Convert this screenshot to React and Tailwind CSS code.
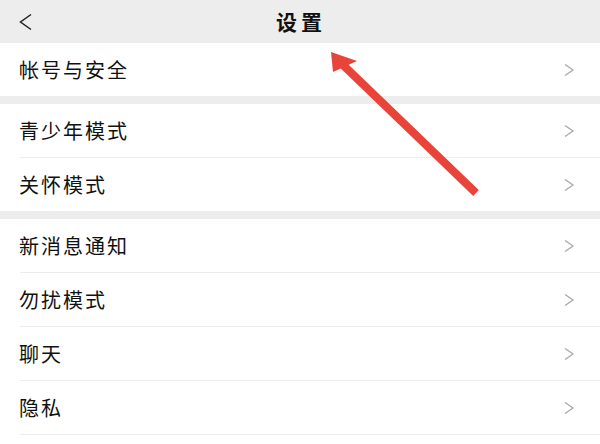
import React from "react";

const font = { fontFamily: '"Noto Sans CJK SC", "Noto Sans", sans-serif' };

function Chevron() {
  return (
    <svg width="12" height="14" viewBox="0 0 12 14" className="mr-[25px]">
      <path d="M2 1.5 L10 7 L2 12.5" fill="none" stroke="#a8a8a8" strokeWidth="1.3" />
    </svg>
  );
}

function Row({ label, divider }) {
  return (
    <div className="flex flex-col bg-white">
      <div className="flex h-[53px] items-center justify-between">
        <span className="pl-[19px] text-[20px] tracking-[2px] text-[#111]">{label}</span>
        <Chevron />
      </div>
      {divider && <div className="ml-[20px] h-px bg-[#ececec]" />}
    </div>
  );
}

export default function App() {
  return (
    <div className="relative h-[444px] w-[600px] overflow-hidden bg-white" style={font}>
      <div className="flex h-[43px] items-center bg-[#ededed]">
        <div className="flex w-[60px] pl-[18px]">
          <svg width="16" height="18" viewBox="0 0 16 18">
            <path d="M13 1.5 L2.5 9 L13 16.5" fill="none" stroke="#222" strokeWidth="1.5" />
          </svg>
        </div>
        <div className="flex-1 pl-[2px] text-center text-[21px] font-bold tracking-[4px] text-[#111]">设置</div>
        <div className="w-[60px]" />
      </div>
      <Row label="帐号与安全" />
      <div className="h-[8px] bg-[#ededed]" />
      <Row label="青少年模式" divider />
      <Row label="关怀模式" />
      <div className="h-[8px] bg-[#ededed]" />
      <Row label="新消息通知" divider />
      <Row label="勿扰模式" divider />
      <Row label="聊天" divider />
      <Row label="隐私" divider />
      <svg className="absolute left-0 top-0" width="600" height="444" viewBox="0 0 600 444">
        <line x1="476" y1="193" x2="342" y2="64" stroke="#e8443a" strokeWidth="8" />
        <polygon points="331,52 357,61 333,72" fill="#e8443a" />
      </svg>
    </div>
  );
}
